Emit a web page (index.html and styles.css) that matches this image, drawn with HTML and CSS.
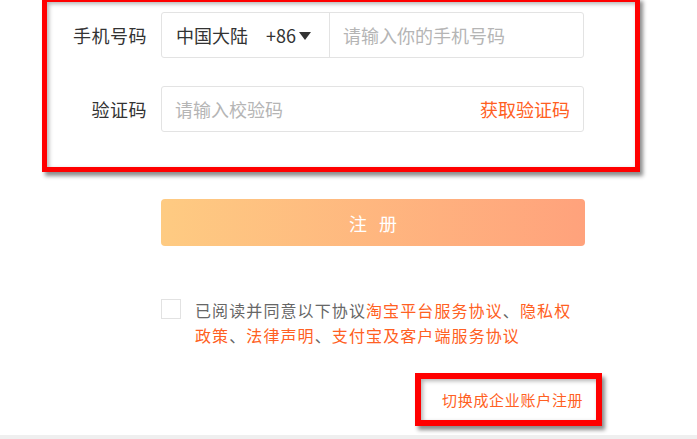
FILE: index.html
```html
<!DOCTYPE html>
<html lang="zh-CN">
<head>
<meta charset="utf-8">
<title>注册</title>
<link rel="stylesheet" href="styles.css">
</head>
<body>
<div class="page">
  <div class="highlight">
    <div class="row row-phone">
      <label class="label">手机号码</label>
      <div class="field">
        <div class="country">
          <span class="country-name">中国大陆</span>
          <span class="country-code">+86</span>
          <svg class="caret" width="12" height="8" viewBox="0 0 12 8"><path d="M0 0 H12 L6 8 Z" fill="#333"/></svg>
        </div>
        <input class="input" type="text" placeholder="请输入你的手机号码">
      </div>
    </div>
    <div class="row row-code">
      <label class="label">验证码</label>
      <div class="field">
        <input class="input" type="text" placeholder="请输入校验码">
        <span class="get-code">获取验证码</span>
      </div>
    </div>
  </div>

  <button class="submit" type="button">注 册</button>

  <div class="agree">
    <span class="checkbox"></span>
    <div class="agree-text">
      <div class="agree-line">已阅读并同意以下协议<a class="link">淘宝平台服务协议</a>、<a class="link">隐私权</a></div>
      <div class="agree-line"><a class="link">政策</a>、<a class="link">法律声明</a>、<a class="link">支付宝及客户端服务协议</a></div>
    </div>
  </div>

  <div class="switch-box">
    <a class="switch">切换成企业账户注册</a>
  </div>

  <div class="footer-bar"></div>
</div>
</body>
</html>
```

FILE: styles.css
```css
* { box-sizing: border-box; }
html, body { margin: 0; padding: 0; background: #fff; }
body {
  font-family: "Noto Sans CJK SC", "Noto Sans", "Liberation Sans", sans-serif;
  color: #333;
  overflow: hidden;
}
.page {
  width: 697px;
  height: 439px;
  display: flex;
  flex-direction: column;
}
.highlight {
  margin-top: -3px;
  margin-left: 42px;
  width: 598px;
  height: 175px;
  border: 5px solid #ff0000;
  box-shadow: 3px 4px 4px rgba(0,0,0,0.45), inset 2px 2px 4px rgba(0,0,0,0.3);
  padding-top: 10px;
  display: flex;
  flex-direction: column;
  gap: 28px;
}
.row {
  display: flex;
  align-items: center;
  height: 46px;
}
.label {
  width: 100px;
  text-align: right;
  font-size: 18px;
  letter-spacing: 0.5px;
  color: #333;
  margin-right: 14px;
  line-height: 46px;
}
.field {
  width: 423px;
  height: 46px;
  border: 1px solid #e3e3e3;
  border-radius: 3px;
  display: flex;
  align-items: center;
}
.country {
  width: 168px;
  height: 100%;
  border-right: 1px solid #e3e3e3;
  display: flex;
  align-items: center;
  padding-left: 14px;
  font-size: 18px;
  color: #333;
}
.country-name { margin-right: 18px; }
.country-code { margin-right: 3px; }
.caret { display: block; margin-top: 1px; }
.input {
  flex: 1;
  min-width: 0;
  border: none;
  outline: none;
  height: 100%;
  padding: 0 13px;
  font-family: inherit;
  font-size: 18px;
  color: #333;
  background: transparent;
}
.input::placeholder { color: #b5b5b5; }
.get-code {
  font-size: 18px;
  color: #ff6022;
  margin-right: 13px;
  white-space: nowrap;
}
.submit {
  margin-top: 27px;
  margin-left: 161px;
  width: 424px;
  height: 47px;
  border: none;
  border-radius: 4px;
  background: linear-gradient(to right, #fecb82, #ffa27c);
  color: #fff;
  font-family: inherit;
  font-size: 18px;
  letter-spacing: 4px;
  padding: 0 0 0 4px;
}
.agree {
  margin-top: 53px;
  margin-left: 161px;
  display: flex;
  align-items: flex-start;
}
.checkbox {
  width: 20px;
  height: 20px;
  border: 1px solid #e2e2e2;
  flex: none;
}
.agree-text {
  margin: -1px 0 0 14px;
  width: 390px;
  font-size: 16px;
  letter-spacing: 1.1px;
  line-height: 25px;
  color: #666;
  white-space: nowrap;
}
.link { color: #ff6022; text-decoration: none; }
.switch-box {
  margin-top: 25px;
  margin-left: 415px;
  width: 187px;
  height: 53px;
  border: 6px solid #ff0000;
  box-shadow: 3px 4px 4px rgba(0,0,0,0.45), inset 2px 2px 4px rgba(0,0,0,0.3);
  display: flex;
  align-items: center;
  padding-left: 21px;
}
.switch {
  font-size: 15px;
  letter-spacing: 0.7px;
  color: #ff6022;
  text-decoration: none;
  white-space: nowrap;
}
.footer-bar {
  margin-top: 9px;
  height: 4px;
  background: #efefef;
}
```
